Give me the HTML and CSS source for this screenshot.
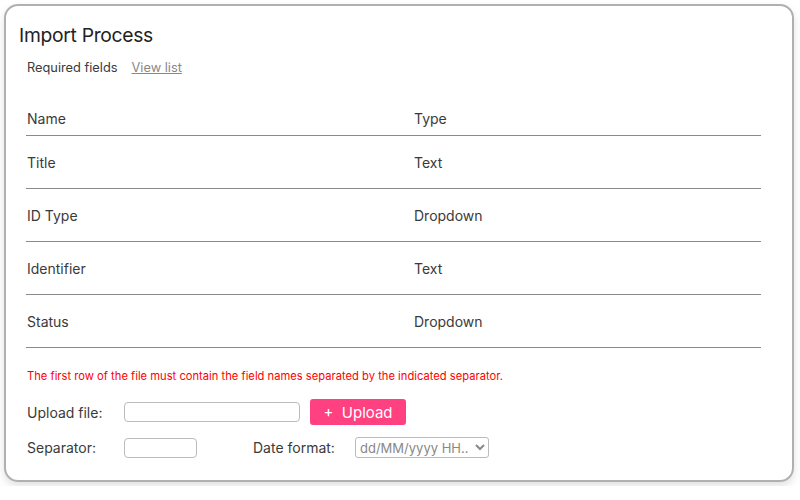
FILE: index.html
```html
<!DOCTYPE html>
<html lang="en">

<head>
    <meta charset="UTF-8">
    <title>Import Process</title>
    <link rel="stylesheet" href="styles.css">
</head>

<body>
    <div class="card">
        <h2 class="card-title">Import Process</h2>

        <div class="fields-head">
            <span>Required fields</span>
            <a href="#" class="view-link">View list</a>
        </div>

        <table class="fields-table">
            <thead>
                <tr>
                    <th class="col-name">Name</th>
                    <th>Type</th>
                </tr>
            </thead>
            <tbody>
                <tr><td>Title</td><td>Text</td></tr>
                <tr><td>ID Type</td><td>Dropdown</td></tr>
                <tr><td>Identifier</td><td>Text</td></tr>
                <tr><td>Status</td><td>Dropdown</td></tr>
            </tbody>
        </table>

        <p class="notice">The first row of the file must contain the field names separated by the indicated separator.</p>

        <div class="form-row upload-row">
            <label class="form-label">Upload file:</label>
            <input type="text" class="file-input">
            <button class="upload-btn">+&nbsp; Upload</button>
        </div>

        <div class="form-row sep-row">
            <label class="form-label">Separator:</label>
            <input type="text" class="sep-input">
            <label class="date-label">Date format:</label>
            <select class="date-select">
                <option>dd/MM/yyyy HH..</option>
            </select>
        </div>
    </div>
</body>

</html>
```

FILE: styles.css
```css
body {
    font-family: Inter, "Noto Sans", sans-serif;
    margin: 0;
    padding: 4px;
    background-color: #fff;
    color: #3a3a3a;
}

.card {
    width: 790px;
    height: 478px;
    box-sizing: border-box;
    border: 2px solid #b0b0b0;
    border-radius: 14px;
    box-shadow: 0 4px 8px rgba(0, 0, 0, 0.12);
    padding: 16px 32px 0 13px;
}

.card-title {
    margin: 0;
    font-size: 19.3px;
    font-weight: 400;
    color: #222;
    letter-spacing: -0.3px;
    line-height: 26px;
}

.fields-head {
    display: flex;
    gap: 14px;
    margin: 11px 0 0 8px;
    font-size: 12.8px;
    line-height: 18px;
}

.view-link {
    color: #888;
    text-decoration: underline;
}

.fields-table {
    width: 735px;
    margin: 24px 0 0 7px;
    border-collapse: collapse;
    font-size: 14px;
}

.fields-table th,
.fields-table td {
    text-align: left;
    font-weight: 400;
    padding: 0 0 0 1px;
    border-bottom: 1.5px solid #8a8a8a;
    height: 52px;
}

.fields-table th {
    height: 34px;
}

.fields-table .col-name {
    width: 386px;
}

.notice {
    margin: 20px 0 0 8px;
    font-size: 11.2px;
    color: #f00;
    line-height: 16px;
}

.form-row {
    display: flex;
    align-items: center;
    margin-left: 8px;
    font-size: 14px;
}

.upload-row {
    margin-top: 15px;
}

.sep-row {
    margin-top: 12px;
}

.form-label {
    width: 97px;
}

.file-input,
.sep-input {
    height: 20px;
    box-sizing: border-box;
    border: 1px solid #bbb;
    border-radius: 4px;
    padding: 0 4px;
}

.file-input {
    width: 176px;
}

.sep-input {
    width: 73px;
}

.upload-btn {
    margin-left: 10px;
    width: 96px;
    height: 26px;
    border: none;
    border-radius: 3px;
    background-color: #ff4081;
    color: #fff;
    font-family: inherit;
    font-size: 15px;
}

.date-label {
    margin-left: 56px;
    width: 102px;
}

.date-select {
    width: 134px;
    height: 21px;
    border: 1px solid #bbb;
    border-radius: 3px;
    background: #fff;
    color: #888;
    font-family: inherit;
    font-size: 13px;
}
```
